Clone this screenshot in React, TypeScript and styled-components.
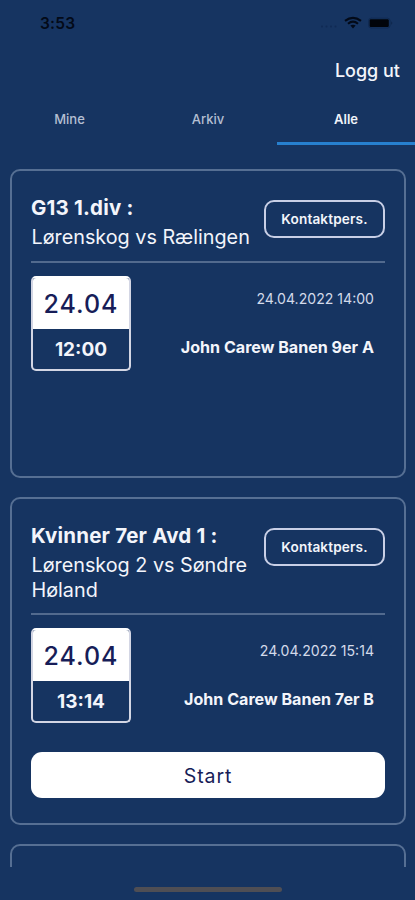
import React from "react";
import styled, { createGlobalStyle } from "styled-components";

const navy = "#163461";

const GlobalStyle = createGlobalStyle`
  * { box-sizing: border-box; }
  body { margin: 0; background: ${navy}; }
  button { font: inherit; color: inherit; background: none; border: 0; padding: 0; }
`;

const Screen = styled.div`
  display: flex;
  flex-direction: column;
  width: 415px;
  height: 900px;
  overflow: hidden;
  background: ${navy};
  color: #f3f5fb;
  font-family: Inter, "Liberation Sans", sans-serif;
  white-space: nowrap;
`;

const StatusBar = styled.div`
  display: flex;
  flex: none;
  align-items: center;
  justify-content: space-between;
  height: 46px;
  padding: 0 20px 0 40px;
  color: #030a18;
`;

const Clock = styled.span`
  padding-top: 1px;
  font-size: 15.5px;
  font-weight: 600;
  letter-spacing: 0.2px;
`;

const StatusIcons = styled.svg`
  display: block;
`;

const TopBar = styled.div`
  display: flex;
  flex: none;
  align-items: center;
  justify-content: flex-end;
  height: 49px;
  padding-right: 15px;
`;

const LogoutButton = styled.button`
  font-size: 18px;
  font-weight: 500;
`;

const Tabs = styled.nav`
  display: grid;
  flex: none;
  grid-template-columns: 139px 138px 138px;
  height: 50px;
`;

const Tab = styled.button<{ $active?: boolean }>`
  padding-bottom: ${(p) => (p.$active ? 0 : 3)}px;
  border-bottom: ${(p) => (p.$active ? "3px solid #2780cf" : "0")};
  color: ${(p) => (p.$active ? "#f0f3fa" : "#b4bfd2")};
  font-size: 13px;
  font-weight: ${(p) => (p.$active ? 600 : 500)};
`;

const MatchList = styled.main`
  display: flex;
  flex: none;
  flex-direction: column;
  gap: 19px;
  height: 722px;
  padding: 24px 9px 0 10px;
  overflow: hidden;
`;

const Card = styled.article<{ $height: number }>`
  flex: none;
  height: ${(p) => p.$height}px;
  padding: 25px 19px 0;
  border: 2px solid #566f93;
  border-radius: 10px;
`;

const CardHeader = styled.header`
  display: flex;
  align-items: flex-start;
  justify-content: space-between;
  padding-bottom: 11px;
  border-bottom: 2px solid #526a8e;
`;

const Title = styled.h2`
  margin: 0 0 5px;
  font-size: 20.5px;
  font-weight: 700;
  line-height: 24px;
  letter-spacing: 0.18px;
`;

const Teams = styled.p`
  margin: 0;
  padding-left: 0.5px;
  font-size: 19.8px;
  line-height: 24.5px;
  white-space: pre-line;
`;

const ContactButton = styled.button`
  flex: none;
  width: 121px;
  height: 38px;
  margin-top: 4px;
  border: 2px solid #c8cfe6;
  border-radius: 10px;
  font-size: 13.6px;
  font-weight: 600;
  letter-spacing: 0.15px;
`;

const Details = styled.div`
  display: flex;
  justify-content: space-between;
  padding: 13px 11px 0 0;
`;

const DateBox = styled.div`
  width: 100px;
  height: 95px;
  overflow: hidden;
  border: 2px solid #d3d6e4;
  border-top-color: #fff;
  border-radius: 5px;
  text-align: center;
`;

const Day = styled.div`
  height: 51px;
  background: #fff;
  color: #171d58;
  font-size: 25px;
  font-weight: 550;
  line-height: 52px;
  letter-spacing: 1px;
`;

const Time = styled.div`
  font-size: 19px;
  font-weight: 700;
  line-height: 41px;
`;

const Place = styled.div`
  display: flex;
  flex-direction: column;
  align-items: flex-end;
  padding-top: 13px;
`;

const Stamp = styled.time`
  color: #d3daea;
  font-size: 14.1px;
  line-height: 20px;
`;

const Venue = styled.strong`
  margin-top: 28px;
  font-size: 16.1px;
  font-weight: 700;
  line-height: 21px;
`;

const StartButton = styled.button`
  width: 100%;
  height: 46px;
  margin-top: 29px;
  padding-top: 1px;
  border-radius: 11px;
  background: #fff;
  color: #171d58;
  font-size: 19.5px;
  letter-spacing: 0.9px;
`;

const HomeArea = styled.footer`
  display: flex;
  justify-content: center;
  padding-top: 20px;
`;

const HomeIndicator = styled.div`
  width: 148px;
  height: 5px;
  border-radius: 3px;
  background: #4f4e54;
`;

interface Match {
  title: string;
  teams: string;
  day: string;
  time: string;
  stamp: string;
  venue: string;
  canStart: boolean;
  height: number;
}

const matches: Match[] = [
  {
    title: "G13 1.div :",
    teams: "Lørenskog vs Rælingen",
    day: "24.04",
    time: "12:00",
    stamp: "24.04.2022 14:00",
    venue: "John Carew Banen 9er A",
    canStart: false,
    height: 309,
  },
  {
    title: "Kvinner 7er Avd 1 :",
    teams: "Lørenskog 2 vs Søndre\nHøland",
    day: "24.04",
    time: "13:14",
    stamp: "24.04.2022 15:14",
    venue: "John Carew Banen 7er B",
    canStart: true,
    height: 328,
  },
];

const MatchCard = ({ match }: { match: Match }) => (
  <Card $height={match.height}>
    <CardHeader>
      <div>
        <Title>{match.title}</Title>
        <Teams>{match.teams}</Teams>
      </div>
      <ContactButton>Kontaktpers.</ContactButton>
    </CardHeader>
    <Details>
      <DateBox>
        <Day>{match.day}</Day>
        <Time>{match.time}</Time>
      </DateBox>
      <Place>
        <Stamp>{match.stamp}</Stamp>
        <Venue>{match.venue}</Venue>
      </Place>
    </Details>
    {match.canStart && <StartButton>Start</StartButton>}
  </Card>
);

export default function App() {
  return (
    <>
      <GlobalStyle />
      <Screen>
        <StatusBar>
          <Clock>3:53</Clock>
          <StatusIcons width="76" height="14" viewBox="0 0 76 14">
            <g fill="#102a54">
              <circle cx="3" cy="10.5" r="1" />
              <circle cx="7.5" cy="10.5" r="1" />
              <circle cx="12" cy="10.5" r="1" />
              <circle cx="16.5" cy="10.5" r="1" />
            </g>
            <g fill="none" stroke="#030a18" strokeWidth="2.1">
              <path d="M26 4.9Q34 -1.3 42 4.9" />
              <path d="M29 7.8Q34 3.6 39 7.8" />
            </g>
            <path d="M31.4 9.6Q34 7.8 36.6 9.6L34 12.4Z" fill="#030a18" />
            <rect x="49.5" y="2.2" width="21.6" height="9.8" rx="2.6" fill="none" stroke="#102a52" />
            <rect x="50.6" y="3.3" width="19.2" height="7.6" rx="1.2" fill="#01040a" />
            <path d="M72.4 5.2Q74.2 7 72.4 8.9Z" fill="#0c2244" />
          </StatusIcons>
        </StatusBar>
        <TopBar>
          <LogoutButton>Logg ut</LogoutButton>
        </TopBar>
        <Tabs>
          <Tab>Mine</Tab>
          <Tab>Arkiv</Tab>
          <Tab $active>Alle</Tab>
        </Tabs>
        <MatchList>
          {matches.map((match) => (
            <MatchCard key={match.title} match={match} />
          ))}
          <Card $height={309} />
        </MatchList>
        <HomeArea>
          <HomeIndicator />
        </HomeArea>
      </Screen>
    </>
  );
}
